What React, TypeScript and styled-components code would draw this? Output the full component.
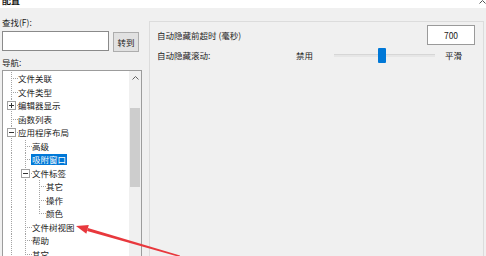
import React from 'react';
import styled, { createGlobalStyle } from 'styled-components';

const GlobalStyle = createGlobalStyle`
  html, body {
    margin: 0;
    padding: 0;
    background: #f0f0f0;
    overflow: hidden;
  }
  body {
    font-family: "Noto Sans CJK SC", "Noto Sans", sans-serif;
    font-size: 8.5px;
    color: #222;
  }
  * { box-sizing: border-box; }
`;

type Guide = 'full' | 'tee' | 'end' | 'none';

type TreeItem = {
    label: string;
    level: number;
    expander?: 'plus' | 'minus';
    selected?: boolean;
};

const items: TreeItem[] = [
    { label: '文件关联', level: 0 },
    { label: '文件类型', level: 0 },
    { label: '编辑器显示', level: 0, expander: 'plus' },
    { label: '函数列表', level: 0 },
    { label: '应用程序布局', level: 0, expander: 'minus' },
    { label: '高级', level: 1 },
    { label: '吸附窗口', level: 1, selected: true },
    { label: '文件标签', level: 1, expander: 'minus' },
    { label: '其它', level: 2 },
    { label: '操作', level: 2 },
    { label: '颜色', level: 2 },
    { label: '文件树视图', level: 1 },
    { label: '帮助', level: 1 },
    { label: '其它', level: 1 },
];

// does the branch at column c keep going below row i
const continues = (i: number, c: number) => {
    for (let j = i + 1; j < items.length; j++) {
        if (items[j].level < c) return false;
        if (items[j].level === c) return true;
    }
    return true;
};

const guidesFor = (i: number): Guide[] => {
    const item = items[i];
    const out: Guide[] = [];
    for (let c = 0; c < item.level; c++) {
        out.push(continues(i, c) ? 'full' : 'none');
    }
    out.push(continues(i, item.level) ? 'tee' : 'end');
    return out;
};

const Window = styled.div`
    position: relative;
    width: 486px;
    height: 256px;
    overflow: hidden;
    background: #f0f0f0;
`;

const TitleBar = styled.div`
    height: 8px;
    background: #fff;
    display: flex;
    justify-content: space-between;
    align-items: flex-end;
    overflow: hidden;
    padding: 0 0 3px 2px;
`;

const TitleText = styled.span`
    font-size: 9px;
    line-height: 9px;
    font-weight: 700;
    color: #111;
`;

const TitleChevron = styled.svg`
    align-self: flex-start;
    margin-top: 0;
`;

const Body = styled.div`
    display: flex;
    gap: 7px;
    padding: 0 2px 0 2px;
`;

const LeftColumn = styled.div`
    width: 140px;
    flex: none;
    display: flex;
    flex-direction: column;
`;

const FieldLabel = styled.div<{ $top: number }>`
    line-height: 12px;
    height: 12px;
    margin-top: ${(p) => p.$top}px;
`;

const SearchRow = styled.div`
    display: flex;
    gap: 4px;
    height: 21px;
    margin-top: 3px;
`;

const SearchInput = styled.div`
    width: 107px;
    height: 20px;
    background: #fff;
    border: 1px solid #8a8a8a;
`;

const GoButton = styled.div`
    width: 26px;
    height: 20px;
    align-self: flex-end;
    background: #e1e1e1;
    border: 1px solid #adadad;
    display: flex;
    align-items: center;
    justify-content: center;
    line-height: 1;
`;

const TreeBox = styled.div`
    margin-top: 2px;
    width: 140px;
    height: 200px;
    background: #fff;
    border: 1px solid #9c9c9c;
    display: flex;
`;

const TreeBody = styled.div`
    flex: 1;
    padding: 1px 0 0 1px;
    display: flex;
    flex-direction: column;
`;

const Row = styled.div`
    height: 13.5px;
    flex: none;
    display: flex;
    align-items: stretch;
`;

const dotsV = 'repeating-linear-gradient(to bottom, #a3a3a3 0 1px, transparent 1px 2px)';
const dotsH = 'repeating-linear-gradient(to right, #a3a3a3 0 1px, transparent 1px 2px)';

const GuideCell = styled.div<{ $kind: Guide; $own: boolean }>`
    width: 14px;
    flex: none;
    display: flex;
    align-items: center;
    padding-left: 3px;
    background-image: ${(p) =>
        [
            p.$kind === 'none' ? null : dotsV,
            p.$own ? dotsH : null,
        ]
            .filter(Boolean)
            .join(', ') || 'none'};
    background-repeat: no-repeat;
    background-size: ${(p) =>
        [
            p.$kind === 'none' ? null : p.$kind === 'end' ? '1px 50%' : '1px 100%',
            p.$own ? '7px 1px' : null,
        ]
            .filter(Boolean)
            .join(', ')};
    background-position: ${(p) =>
        [p.$kind === 'none' ? null : '7px 0', p.$own ? '7px 50%' : null]
            .filter(Boolean)
            .join(', ')};
`;

const ItemLabel = styled.span<{ $selected?: boolean }>`
    align-self: center;
    height: 11px;
    line-height: 11px;
    padding: 0 1px;
    margin-left: -1px;
    white-space: nowrap;
    background: ${(p) => (p.$selected ? '#0078d7' : 'transparent')};
    color: ${(p) => (p.$selected ? '#fff' : '#222')};
`;

const ScrollBar = styled.div`
    width: 12px;
    flex: none;
    background: #f0f0f0;
    display: flex;
    flex-direction: column;
`;

const ScrollArrow = styled.div`
    height: 14px;
    flex: none;
    display: flex;
    align-items: center;
    justify-content: center;
`;

const ScrollTrack = styled.div`
    flex: 1;
    padding: 23px 1px 0 1px;
`;

const ScrollThumb = styled.div`
    height: 79px;
    background: #cdcdcd;
`;

const Panel = styled.div`
    width: 335px;
    height: 240px;
    margin-top: 13px;
    border: 1px solid #dcdcdc;
    background: #f0f0f0;
    padding: 3px 8px 0 7px;
    display: flex;
    flex-direction: column;
`;

const SettingRow = styled.div<{ $h: number; $top: number }>`
    height: ${(p) => p.$h}px;
    margin-top: ${(p) => p.$top}px;
    display: flex;
    align-items: center;
    line-height: 1;
`;

const SettingLabel = styled.span`
    flex: 1;
    white-space: nowrap;
`;

const NumberBox = styled.div`
    width: 48px;
    height: 20px;
    background: #fff;
    border: 1px solid #9a9a9a;
    display: flex;
    align-items: center;
    justify-content: center;
`;

const Slider = styled.div`
    width: 101px;
    height: 15px;
    margin: 0 10px 0 21px;
    display: flex;
    align-items: center;
`;

const SliderRail = styled.div<{ $grow: number }>`
    flex: ${(p) => p.$grow} 1 0;
    height: 3px;
    background: #e6e6e6;
    border-top: 1px solid #d6d6d6;
`;

const SliderThumb = styled.div`
    width: 8px;
    height: 15px;
    flex: none;
    background: #0078d7;
    border-radius: 1px;
`;

const EndLabel = styled.span`
    margin-right: 13px;
`;

const Overlay = styled.svg`
    position: absolute;
    left: 0;
    top: 0;
    pointer-events: none;
`;

const Chevron = ({ up }: { up?: boolean }) => (
    <svg width="7" height="4" viewBox="0 0 7 4">
        <polyline
            points={up ? '0.5,3.5 3.5,0.5 6.5,3.5' : '0.5,0.5 3.5,3.5 6.5,0.5'}
            fill="none"
            stroke="#606060"
            strokeWidth="1"
        />
    </svg>
);

const Expander = ({ kind }: { kind: 'plus' | 'minus' }) => (
    <svg width="9" height="9" viewBox="0 0 9 9">
        <rect x="0.5" y="0.5" width="8" height="8" fill="#fff" stroke="#a0a0a0" />
        <line x1="2" y1="4.5" x2="7" y2="4.5" stroke="#333" />
        {kind === 'plus' && <line x1="4.5" y1="2" x2="4.5" y2="7" stroke="#333" />}
    </svg>
);

const App = () => {
    const sliderValue = 47;

    return (
        <Window>
            <GlobalStyle />
            <TitleBar>
                <TitleText>配置</TitleText>
                <TitleChevron width="7" height="4" viewBox="0 0 7 4">
                    <polyline points="0.5,3.5 3.5,0.5 6.5,3.5" fill="none" stroke="#555" />
                </TitleChevron>
            </TitleBar>
            <Body>
                <LeftColumn>
                    <FieldLabel $top={8}>查找(F):</FieldLabel>
                    <SearchRow>
                        <SearchInput />
                        <GoButton>转到</GoButton>
                    </SearchRow>
                    <FieldLabel $top={4}>导航:</FieldLabel>
                    <TreeBox>
                        <TreeBody>
                            {items.map((item, i) => {
                                const guides = guidesFor(i);
                                return (
                                    <Row key={i}>
                                        {guides.map((g, c) => {
                                            const own = c === item.level;
                                            return (
                                                <GuideCell key={c} $kind={g} $own={own}>
                                                    {own && item.expander && (
                                                        <Expander kind={item.expander} />
                                                    )}
                                                </GuideCell>
                                            );
                                        })}
                                        <ItemLabel $selected={item.selected}>{item.label}</ItemLabel>
                                    </Row>
                                );
                            })}
                        </TreeBody>
                        <ScrollBar>
                            <ScrollArrow>
                                <Chevron up />
                            </ScrollArrow>
                            <ScrollTrack>
                                <ScrollThumb />
                            </ScrollTrack>
                            <ScrollArrow>
                                <Chevron />
                            </ScrollArrow>
                        </ScrollBar>
                    </TreeBox>
                </LeftColumn>
                <Panel>
                    <SettingRow $h={20} $top={0}>
                        <SettingLabel>自动隐藏前超时 (毫秒)</SettingLabel>
                        <NumberBox>700</NumberBox>
                    </SettingRow>
                    <SettingRow $h={15} $top={3}>
                        <SettingLabel>自动隐藏滚动:</SettingLabel>
                        <span>禁用</span>
                        <Slider>
                            <SliderRail $grow={sliderValue} />
                            <SliderThumb />
                            <SliderRail $grow={100 - sliderValue} />
                        </Slider>
                        <EndLabel>平滑</EndLabel>
                    </SettingRow>
                </Panel>
            </Body>
            <Overlay width="486" height="256" viewBox="0 0 486 256">
                <polygon points="87.9,227.9 180,255.4 179.6,257 87.1,230.9" fill="#e8383d" />
                <polygon points="76,226 88.8,225.1 86.3,233.7" fill="#e8383d" />
            </Overlay>
        </Window>
    );
};

export default App;
